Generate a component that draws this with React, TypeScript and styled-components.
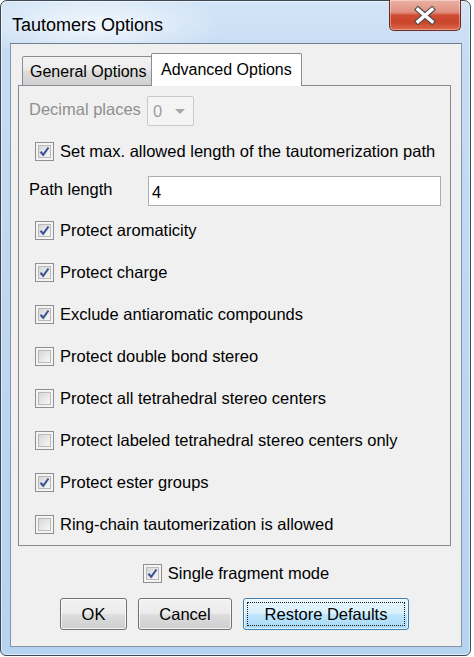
import React from "react";
import styled, { createGlobalStyle, css } from "styled-components";

const GlobalStyle = createGlobalStyle`
  html, body { margin: 0; padding: 0; background: #ffffff; }
  body { font-family: "Liberation Sans", Arial, sans-serif; color: #000; }
  * { box-sizing: border-box; }
`;

const Window = styled.div`
  width: 471px;
  height: 656px;
  border: 1px solid #3e4854;
  border-radius: 7px 7px 6px 6px;
  background:
    radial-gradient(ellipse 130px 34px at 95px 24px, rgba(255,255,255,0.75), rgba(255,255,255,0) 100%),
    linear-gradient(180deg, #d3e5f7 0%, #c6dcf3 8%, #bcd6f1 60%, #b6d3f1 100%);
  box-shadow: inset 0 0 0 1px rgba(255,255,255,0.55);
  display: flex;
  flex-direction: column;
  padding: 0 8px 8px 9px;
`;

const TitleBar = styled.div`
  height: 43px;
  display: flex;
  align-items: flex-start;
`;

const Title = styled.div`
  font-family: "Liberation Sans", Arial, sans-serif;
  font-size: 18px;
  color: #000;
  margin: 14px 0 0 2px;
  line-height: 20px;
`;

const CloseButton = styled.div`
  margin-left: auto;
  margin-top: -1px;
  margin-right: 1px;
  width: 72px;
  height: 31px;
  border: 1px solid #6e2a1f;
  border-top: none;
  border-radius: 0 0 5px 5px;
  background: linear-gradient(180deg, #eab0a3 0%, #e19180 40%, #cf4a30 52%, #c9462b 75%, #dc6a4c 100%);
  box-shadow: inset 0 0 0 1px rgba(255,255,255,0.35);
  display: flex;
  align-items: center;
  justify-content: center;
`;

const Client = styled.div`
  flex: 1;
  background: #f0f0f0;
  border: 1px solid #8594a7;
  border-top-color: #6f7e90;
  padding: 9px 10px 16px 7px;
  display: flex;
  flex-direction: column;
`;

const TabStrip = styled.div`
  height: 33px;
  display: flex;
  align-items: flex-end;
  padding-left: 4px;
  margin-bottom: -1px;
  position: relative;
  z-index: 1;
`;

const Tab = styled.div<{ $active?: boolean }>`
  font-size: 16px;
  display: flex;
  align-items: center;
  border: 1px solid #898c95;
  border-bottom: none;
  border-radius: 2px 2px 0 0;
  white-space: nowrap;
  ${(p) =>
    p.$active
      ? css`
          height: 33px;
          width: 151px;
          margin-left: -1px;
          background: #ffffff;
          padding: 0 0 1px 9px;
        `
      : css`
          height: 29px;
          width: 130px;
          margin-bottom: 1px;
          background: linear-gradient(180deg, #f3f3f3 0%, #ebebeb 45%, #dddddd 50%, #cfcfcf 100%);
          padding: 2px 0 0 7px;
        `}
`;

const Panel = styled.div`
  border: 1px solid #898c95;
  background: #f0f0f0;
  padding: 10px 9px 0 10px;
  display: flex;
  flex-direction: column;
`;

const FieldRow = styled.div<{ $mt?: number }>`
  display: flex;
  align-items: center;
  height: 30px;
  margin-top: ${(p) => p.$mt ?? 0}px;
  font-size: 16.5px;
`;

const FieldLabel = styled.div<{ $disabled?: boolean; $w: number }>`
  width: ${(p) => p.$w}px;
  flex-shrink: 0;
  color: ${(p) => (p.$disabled ? "#8f8f8f" : "#000")};
  margin-top: -3px;
`;

const Combo = styled.div`
  width: 47px;
  height: 30px;
  border: 1px solid #c9c9c9;
  border-radius: 2px;
  background: #f4f4f4;
  display: flex;
  align-items: center;
  padding-left: 5px;
  color: #a0a0a0;
  font-size: 16.5px;
`;

const ComboArrow = styled.div`
  margin-left: 13px;
  width: 0;
  height: 0;
  border-left: 5px solid transparent;
  border-right: 5px solid transparent;
  border-top: 5px solid #a6a6a6;
`;

const TextInput = styled.div`
  flex: 1;
  height: 30px;
  border: 1px solid #abadb3;
  background: #ffffff;
  display: flex;
  align-items: center;
  padding-left: 3px;
  font-size: 16.5px;
  padding-top: 2px;
`;

const CheckList = styled.div`
  margin-top: 3px;
  display: flex;
  flex-direction: column;
`;

const CheckRow = styled.div<{ $h?: number }>`
  display: flex;
  align-items: center;
  height: ${(p) => p.$h ?? 42}px;
  padding-left: 6px;
  font-size: 16.5px;
`;

const Box = styled.div`
  width: 19px;
  height: 19px;
  flex-shrink: 0;
  border: 1px solid #8f8f8f;
  background: #f4f4f4;
  padding: 2px;
  display: flex;
`;

const BoxInner = styled.div`
  flex: 1;
  border: 1px solid #b9b9b9;
  background: linear-gradient(135deg, #d6d6d6 0%, #e9e9e9 55%, #f7f7f7 100%);
  display: flex;
  align-items: center;
  justify-content: center;
`;

const CheckText = styled.span`
  margin-left: 6px;
  white-space: nowrap;
`;

const FragmentRow = styled.div`
  margin-top: 12px;
  height: 30px;
  display: flex;
  align-items: center;
  justify-content: center;
  font-size: 16.5px;
  padding-left: 3px;
`;

const ButtonRow = styled.div`
  margin-top: 10px;
  display: flex;
  justify-content: center;
  gap: 11px;
`;

const Button = styled.div<{ $w: number; $focused?: boolean }>`
  width: ${(p) => p.$w}px;
  height: 32px;
  border-radius: 3px;
  font-size: 16.5px;
  display: flex;
  align-items: center;
  justify-content: center;
  position: relative;
  ${(p) =>
    p.$focused
      ? css`
          border: 1px solid #3c7fb1;
          background: linear-gradient(180deg, #eaf6fd 0%, #d9f0fc 48%, #bee6fd 52%, #a7d9f5 100%);
          box-shadow: inset 0 0 0 1px rgba(255, 255, 255, 0.7);
          &::after {
            content: "";
            position: absolute;
            inset: 3px;
            border: 1px dotted #1c1c1c;
          }
        `
      : css`
          border: 1px solid #707070;
          background: linear-gradient(180deg, #f2f2f2 0%, #ebebeb 48%, #dddddd 52%, #cfcfcf 100%);
          box-shadow: inset 0 0 0 1px rgba(255, 255, 255, 0.75);
        `}
`;

const CheckMark = () => (
  <svg width="11" height="11" viewBox="0 0 11 11">
    <path d="M1.5 5.8 L4.2 8.8 L9.5 1.5" fill="none" stroke="#3f5593" strokeWidth="2.1" strokeLinejoin="miter" />
  </svg>
);

const Checkbox = ({ checked }: { checked?: boolean }) => (
  <Box>
    <BoxInner>{checked ? <CheckMark /> : null}</BoxInner>
  </Box>
);

const CloseX = () => (
  <svg width="24" height="19" viewBox="0 0 24 19">
    <g strokeLinecap="square">
      <path d="M5 3.5 L19 15.5 M19 3.5 L5 15.5" stroke="#4a4a4a" strokeWidth="5.6" fill="none" />
      <path d="M5 3.5 L19 15.5 M19 3.5 L5 15.5" stroke="#ffffff" strokeWidth="3.4" fill="none" />
    </g>
  </svg>
);

const options: { label: string; checked: boolean }[] = [
  { label: "Protect aromaticity", checked: true },
  { label: "Protect charge", checked: true },
  { label: "Exclude antiaromatic compounds", checked: true },
  { label: "Protect double bond stereo", checked: false },
  { label: "Protect all tetrahedral stereo centers", checked: false },
  { label: "Protect labeled tetrahedral stereo centers only", checked: false },
  { label: "Protect ester groups", checked: true },
  { label: "Ring-chain tautomerization is allowed", checked: false },
];

export default function App() {
  return (
    <>
      <GlobalStyle />
      <Window>
        <TitleBar>
          <Title>Tautomers Options</Title>
          <CloseButton>
            <CloseX />
          </CloseButton>
        </TitleBar>
        <Client>
          <TabStrip>
            <Tab>General Options</Tab>
            <Tab $active>Advanced Options</Tab>
          </TabStrip>
          <Panel>
            <FieldRow>
              <FieldLabel $disabled $w={118}>Decimal places</FieldLabel>
              <Combo>
                0<ComboArrow />
              </Combo>
            </FieldRow>
            <FieldRow $mt={10}>
              <CheckRow $h={30}>
                <Checkbox checked />
                <CheckText>Set max. allowed length of the tautomerization path</CheckText>
              </CheckRow>
            </FieldRow>
            <FieldRow $mt={10}>
              <FieldLabel $w={119}>Path length</FieldLabel>
              <TextInput>4</TextInput>
            </FieldRow>
            <CheckList>
              {options.map((o) => (
                <CheckRow key={o.label}>
                  <Checkbox checked={o.checked} />
                  <CheckText>{o.label}</CheckText>
                </CheckRow>
              ))}
            </CheckList>
          </Panel>
          <FragmentRow>
            <Checkbox checked />
            <CheckText>Single fragment mode</CheckText>
          </FragmentRow>
          <ButtonRow>
            <Button $w={67}>OK</Button>
            <Button $w={94}>Cancel</Button>
            <Button $w={166} $focused>Restore Defaults</Button>
          </ButtonRow>
        </Client>
      </Window>
    </>
  );
}
